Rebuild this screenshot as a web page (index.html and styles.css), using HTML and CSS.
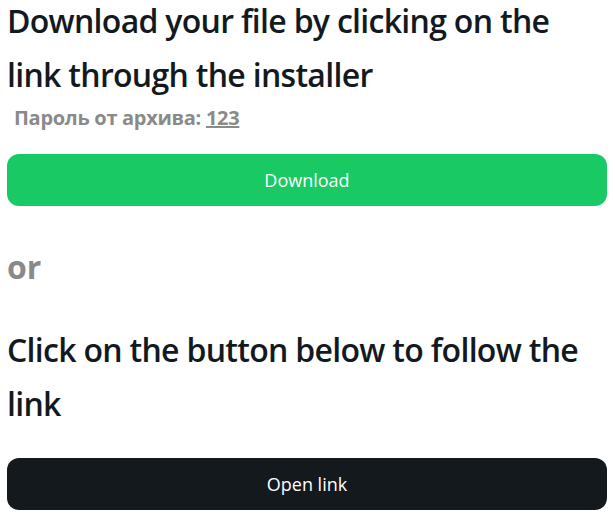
FILE: index.html
```html
<!DOCTYPE html>
<html lang="en">
<head>
<meta charset="utf-8">
<title>Download</title>
<link rel="stylesheet" href="styles.css">
</head>
<body>
<main class="page">
  <h1 class="title">Download your file by clicking on the link through the installer</h1>
  <p class="password">Пароль от архива: <span class="code">123</span></p>
  <a class="btn btn-green" href="#">Download</a>
  <p class="or">or</p>
  <h2 class="title title-second">Click on the button below to follow the link</h2>
  <a class="btn btn-dark" href="#">Open link</a>
</main>
</body>
</html>
```
FILE: styles.css
```css
* { box-sizing: border-box; }
body {
  margin: 0;
  background: #fff;
  font-family: "Open Sans", "Noto Sans", sans-serif;
}
.page {
  padding: 0 8px 0 7px;
  display: flex;
  flex-direction: column;
}
.title {
  margin: 0;
  font-size: 32px;
  font-weight: 600;
  line-height: 54px;
  color: #121a1f;
  letter-spacing: -0.7px;
  margin-top: -6px;
}
.password {
  margin: 2px 0 0 7px;
  font-size: 20px;
  font-weight: 700;
  color: #8a8a8a;
  line-height: 28px;
  letter-spacing: -0.3px;
}
.code { text-decoration: underline; }
.btn {
  display: flex;
  align-items: center;
  justify-content: center;
  height: 52px;
  border-radius: 12px;
  color: #fff;
  text-decoration: none;
  font-size: 18px;
}
.btn-green { background: #18c964; margin-top: 22px; }
.or {
  margin: 41px 0 0 0;
  font-size: 32px;
  font-weight: 700;
  color: #8a8a8a;
  line-height: 40px;
}
.title-second { margin-top: 36px; }
.btn-dark { background: #13191d; margin-top: 27px; }
```
